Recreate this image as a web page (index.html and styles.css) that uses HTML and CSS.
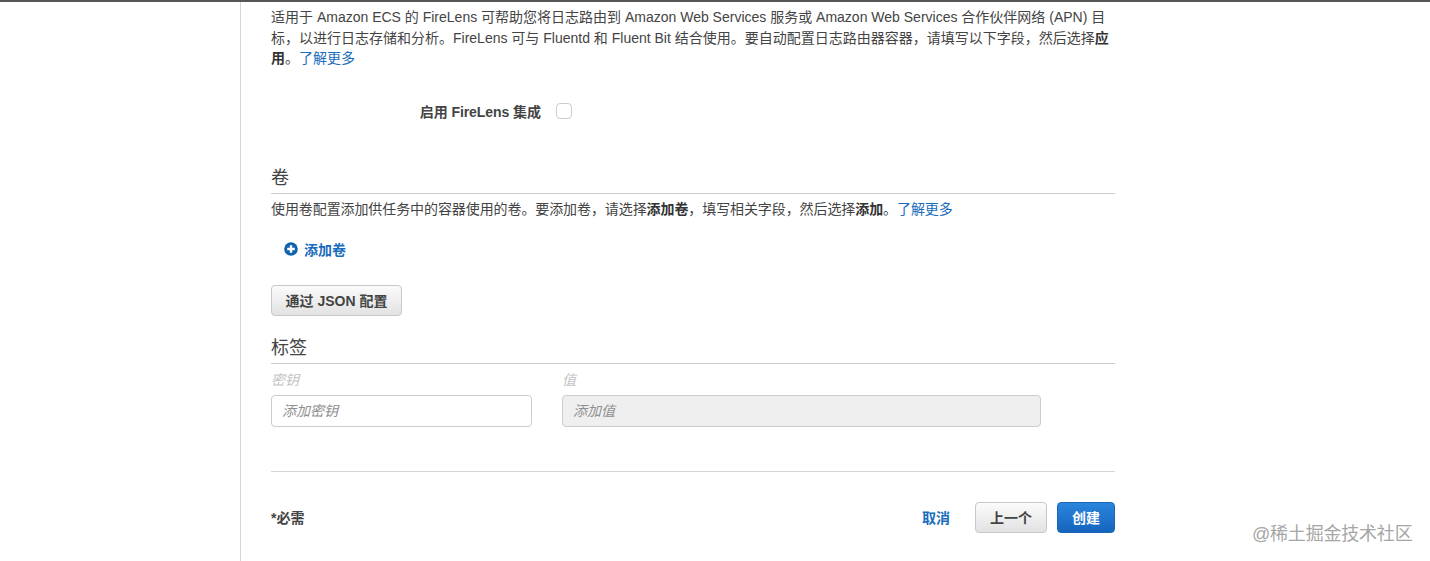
FILE: index.html
```html
<!DOCTYPE html>
<html lang="zh-CN">
<head>
    <meta charset="UTF-8">
    <title>配置任务定义</title>
    <link rel="stylesheet" href="styles.css">
</head>
<body>
    <div class="page">
        <div class="side"></div>
        <div class="main">
            <p class="desc">适用于 Amazon ECS 的 FireLens 可帮助您将日志路由到 Amazon Web Services 服务或 Amazon Web Services 合作伙伴网络 (APN) 目<br>标，以进行日志存储和分析。FireLens 可与 Fluentd 和 Fluent Bit 结合使用。要自动配置日志路由器容器，请填写以下字段，然后选择<b>应</b><br><b>用</b>。<a href="#">了解更多</a></p>

            <div class="check-row">
                <label class="check-label">启用 FireLens 集成</label>
                <span class="checkbox"></span>
            </div>

            <h2 class="section-title title-volume">卷</h2>
            <p class="section-desc">使用卷配置添加供任务中的容器使用的卷。要添加卷，请选择<b>添加卷</b>，填写相关字段，然后选择<b>添加</b>。<a href="#">了解更多</a></p>

            <a class="add-link" href="#">
                <svg width="14" height="14" viewBox="0 0 14 14">
                    <circle cx="7" cy="7" r="6.8" fill="#0f62ad"/>
                    <path d="M3.2 7h7.6M7 3.2v7.6" stroke="#fff" stroke-width="2.4"/>
                </svg>
                添加卷
            </a>

            <button class="btn json-btn">通过 JSON 配置</button>

            <h2 class="section-title title-tags">标签</h2>
            <div class="tag-row">
                <div class="tag-key">
                    <div class="field-label">密钥</div>
                    <input class="input" placeholder="添加密钥">
                </div>
                <div class="tag-value">
                    <div class="field-label">值</div>
                    <input class="input" placeholder="添加值" disabled>
                </div>
            </div>

            <div class="footer">
                <span class="required">*必需</span>
                <div class="actions">
                    <a class="cancel" href="#">取消</a>
                    <button class="btn prev-btn">上一个</button>
                    <button class="btn primary-btn">创建</button>
                </div>
            </div>
        </div>
    </div>
    <div class="watermark">@稀土掘金技术社区</div>
</body>
</html>
```

FILE: styles.css
```css
*{
    box-sizing: border-box;
}
html, body{
    height: 100%;
}
body{
    margin: 0;
    overflow: hidden;
    background-color: #fff;
    color: #444;
    font-family: "Liberation Sans", "Noto Sans CJK SC", sans-serif;
    font-size: 14px;
}
.page{
    display: flex;
    height: 561px;
    border-top: 2px solid #555;
}
.side{
    width: 241px;
    flex-shrink: 0;
    border-right: 1px solid #d5d5d5;
}
.main{
    width: 844px;
    margin-left: 30px;
}
a{
    color: #1a6cbd;
    text-decoration: none;
}
b{
    color: #333;
}
.desc{
    margin: 5px 0 0;
    line-height: 20.5px;
}
.check-row{
    display: flex;
    align-items: center;
    margin-top: 32px;
    height: 20px;
}
.check-label{
    width: 270px;
    text-align: right;
    font-weight: 700;
    color: #444;
    letter-spacing: -0.06px;
}
.checkbox{
    width: 16px;
    height: 16px;
    margin-left: 15px;
    background-color: #fff;
    border: 1px solid #ccc;
    border-radius: 4px;
}
.section-title{
    margin: 0;
    padding-bottom: 2px;
    font-size: 18px;
    font-weight: 400;
    line-height: 26px;
    color: #444;
    border-bottom: 1px solid #ccc;
}
.title-volume{
    margin-top: 44px;
}
.section-desc{
    margin: 5px 0 0;
    line-height: 21px;
    letter-spacing: -0.09px;
}
.add-link{
    display: flex;
    align-items: center;
    gap: 6px;
    margin: 19px 0 0 13px;
    height: 20px;
    font-weight: 700;
}
.btn{
    height: 31px;
    padding: 0;
    font-family: inherit;
    font-size: 14px;
    font-weight: 700;
    color: #444;
    background: linear-gradient(#fbfbfb, #e2e2e2);
    border: 1px solid #c8c8c8;
    border-radius: 4px;
}
.json-btn{
    display: block;
    width: 131px;
    margin-top: 26px;
}
.title-tags{
    margin-top: 19px;
}
.tag-row{
    display: flex;
    gap: 30px;
    margin-top: 6px;
}
.tag-key{
    width: 261px;
}
.tag-value{
    width: 479px;
}
.field-label{
    height: 25px;
    line-height: 21px;
    font-style: italic;
    color: #c4c4c4;
}
.input{
    display: block;
    width: 100%;
    height: 32px;
    padding: 0 10px;
    font-family: inherit;
    font-size: 14px;
    background-color: #fff;
    border: 1px solid #ccc;
    border-radius: 4px;
}
.input::placeholder{
    font-style: italic;
    color: #8f8f8f;
}
.input:disabled{
    background-color: #efefef;
}
.footer{
    display: flex;
    align-items: center;
    justify-content: space-between;
    margin-top: 44px;
    padding-top: 30px;
    border-top: 1px solid #d5d5d5;
}
.required{
    font-weight: 700;
}
.actions{
    display: flex;
    align-items: center;
}
.cancel{
    font-weight: 700;
    margin-right: 25px;
}
.prev-btn{
    width: 72px;
    margin-right: 10px;
}
.primary-btn{
    width: 58px;
    color: #fff;
    background: linear-gradient(#2a85dc, #1564bd);
    border-color: #1a66b8;
}
.watermark{
    position: absolute;
    left: 1252px;
    top: 522px;
    font-size: 18px;
    line-height: 24px;
    color: #a6a6a6;
    letter-spacing: -0.2px;
}
```
